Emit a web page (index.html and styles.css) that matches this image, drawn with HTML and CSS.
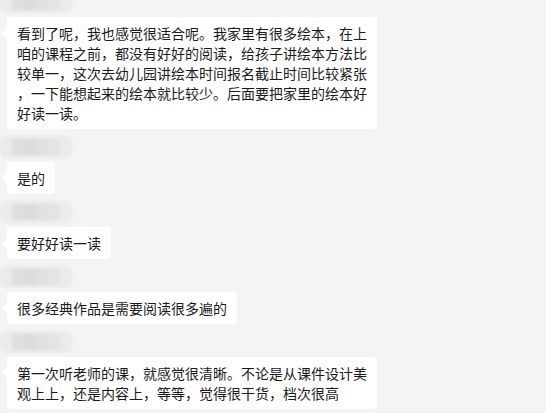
FILE: index.html
```html
<!DOCTYPE html>
<html>
<head>
  <meta charset="utf-8">
  <title>Chat</title>
  <link rel="stylesheet" href="styles.css">
</head>
<body>
  <div class="chat">
    <div class="msg">
      <div class="name"><span></span><span></span><span></span><span></span></div>
      <div class="bubble">看到了呢，我也感觉很适合呢。我家里有很多绘本，在上<br>咱的课程之前，都没有好好的阅读，给孩子讲绘本方法比<br>较单一，这次去幼儿园讲绘本时间报名截止时间比较紧张<br>，一下能想起来的绘本就比较少。后面要把家里的绘本好<br>好读一读。</div>
    </div>
    <div class="msg">
      <div class="name"><span></span><span></span><span></span><span></span></div>
      <div class="bubble">是的</div>
    </div>
    <div class="msg">
      <div class="name"><span></span><span></span><span></span><span></span></div>
      <div class="bubble">要好好读一读</div>
    </div>
    <div class="msg">
      <div class="name"><span></span><span></span><span></span><span></span></div>
      <div class="bubble">很多经典作品是需要阅读很多遍的</div>
    </div>
    <div class="msg">
      <div class="name"><span></span><span></span><span></span><span></span></div>
      <div class="bubble">第一次听老师的课，就感觉很清晰。不论是从课件设计美<br>观上上，还是内容上，等等，觉得很干货，档次很高</div>
    </div>
  </div>
</body>
</html>
```

FILE: styles.css
```css
body {
  margin: 0;
  background: #f4f4f4;
  font-family: "Noto Sans CJK SC", "Microsoft YaHei", sans-serif;
  overflow: hidden;
}

.chat {
  display: flex;
  flex-direction: column;
  align-items: flex-start;
  padding-left: 7px;
  margin-top: -9px;
}

.msg {
  display: flex;
  flex-direction: column;
  align-items: flex-start;
  margin-bottom: 7px;
}

.name {
  display: flex;
  align-items: center;
  width: 72px;
  height: 22px;
  margin-left: -7px;
  margin-bottom: 4px;
  padding-left: 12px;
  box-sizing: border-box;
  background: #ebebeb;
  border-radius: 7px;
  filter: blur(0.8px);
}

.name span {
  width: 12px;
  height: 16px;
  background: #dfdfdf;
}

.name span:nth-child(2) {
  background: #dcdcdc;
}

.name span:nth-child(3) {
  background: #e0e0e0;
}

.name span:nth-child(4) {
  background: #e4e4e6;
}

.bubble {
  position: relative;
  background: #fff;
  color: #1a1a1a;
  font-size: 14px;
  line-height: 20px;
  padding: 6px 10px;
  border-radius: 3px;
  white-space: nowrap;
}

.bubble::before {
  content: "";
  position: absolute;
  left: -5px;
  top: 11px;
  border-top: 5px solid transparent;
  border-bottom: 5px solid transparent;
  border-right: 5px solid #fff;
}
```
